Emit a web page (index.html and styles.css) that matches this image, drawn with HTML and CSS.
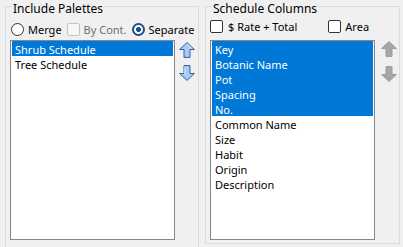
FILE: index.html
```html
<!DOCTYPE html>
<html>
<head>
<meta charset="utf-8">
<link rel="stylesheet" href="styles.css">
</head>
<body>
<div class="dialog">
  <fieldset class="group group-left">
    <legend class="group-title">Include Palettes</legend>
    <div class="options options-left">
      <label class="opt"><span class="radio"></span><span>Merge</span></label>
      <label class="opt opt-disabled"><span class="check check-disabled"></span><span>By Cont.</span></label>
      <label class="opt"><span class="radio radio-on"></span><span>Separate</span></label>
    </div>
    <div class="list-area list-area-left">
      <ul class="listbox">
        <li class="item sel">Shrub Schedule</li>
        <li class="item">Tree Schedule</li>
      </ul>
      <div class="movers movers-left">
        <svg class="arrow" width="16" height="16" viewBox="0 0 16 16"><path d="M8 0.6 L15.4 7.5 L11 7.5 L11 15.4 L5 15.4 L5 7.5 L0.6 7.5 Z" fill="#a9cbf2" stroke="#2f62a3" stroke-width="1" stroke-linejoin="round"/><path d="M8 2.3 L12.8 6.6" stroke="#e4f0fc" stroke-width="1" fill="none"/></svg>
        <svg class="arrow" width="16" height="16" viewBox="0 0 16 16"><path d="M8 15.4 L15.4 8.5 L11 8.5 L11 0.6 L5 0.6 L5 8.5 L0.6 8.5 Z" fill="#a9cbf2" stroke="#2f62a3" stroke-width="1" stroke-linejoin="round"/><path d="M5.9 1.6 L5.9 9.2" stroke="#e4f0fc" stroke-width="1" fill="none"/></svg>
      </div>
    </div>
  </fieldset>
  <fieldset class="group group-right">
    <legend class="group-title">Schedule Columns</legend>
    <div class="options options-right">
      <label class="opt opt-rate"><span class="check"></span><span>$ Rate + Total</span></label>
      <label class="opt"><span class="check"></span><span>Area</span></label>
    </div>
    <div class="list-area list-area-right">
      <ul class="listbox">
        <li class="item sel">Key</li>
        <li class="item sel">Botanic Name</li>
        <li class="item sel">Pot</li>
        <li class="item sel">Spacing</li>
        <li class="item sel">No.</li>
        <li class="item">Common Name</li>
        <li class="item">Size</li>
        <li class="item">Habit</li>
        <li class="item">Origin</li>
        <li class="item">Description</li>
      </ul>
      <div class="movers movers-right">
        <svg class="arrow" width="16" height="16" viewBox="0 0 16 16"><path d="M8 0.6 L15.4 7.5 L11 7.5 L11 15.4 L5 15.4 L5 7.5 L0.6 7.5 Z" fill="#a6a6a6" stroke="#9c9c9c" stroke-width="1" stroke-linejoin="round"/></svg>
        <svg class="arrow" width="16" height="16" viewBox="0 0 16 16"><path d="M8 15.4 L15.4 8.5 L11 8.5 L11 0.6 L5 0.6 L5 8.5 L0.6 8.5 Z" fill="#a6a6a6" stroke="#9c9c9c" stroke-width="1" stroke-linejoin="round"/></svg>
      </div>
    </div>
  </fieldset>
</div>
</body>
</html>
```
FILE: styles.css
```css
html, body {
  margin: 0;
  padding: 0;
  background: #f0f0f0;
}
body {
  font-family: "Noto Sans", "Open Sans", sans-serif;
  font-size: 11px;
  color: #000;
}
.dialog {
  width: 403px;
  height: 247px;
  overflow: hidden;
  box-sizing: border-box;
  display: flex;
  align-items: flex-start;
  gap: 6px;
  padding-left: 5px;
}
.group {
  margin: 0;
  padding: 0 2px 0 4px;
  border: 1px solid #dcdcdc;
  box-sizing: border-box;
  min-width: 0;
}
.group-left {
  width: 194px;
  height: 252px;
}
.group-right {
  width: 195px;
  height: 244px;
}
.group-title {
  font-size: 12px;
  line-height: 9px;
  padding: 4px 1px 0;
  margin-left: 2px;
  color: #000;
}
.options {
  display: flex;
  align-items: center;
  height: 17px;
}
.options-left {
  margin: 8px 0 2px;
  padding-left: 1px;
  gap: 5px;
}
.options-right {
  margin: 5px 0 5px;
  gap: 31px;
}
.opt {
  display: flex;
  align-items: center;
  gap: 4px;
  white-space: nowrap;
}
.opt-rate {
  gap: 5px;
}
.opt-disabled {
  color: #6d6d6d;
}
.radio {
  width: 13px;
  height: 13px;
  box-sizing: border-box;
  border: 1px solid #333;
  border-radius: 50%;
  background: #fff;
}
.radio-on {
  border: 2px solid #1b4e8c;
  background: radial-gradient(circle at center, #1b4e8c 0 2.2px, #fff 2.8px);
}
.check {
  width: 13px;
  height: 13px;
  box-sizing: border-box;
  border: 1px solid #333;
  border-radius: 2px;
  background: #fff;
}
.check-disabled {
  border-color: #c4c4c4;
  background: #f7f7f7;
}
.list-area {
  display: flex;
  align-items: flex-start;
}
.list-area-left {
  gap: 4px;
}
.list-area-right {
  gap: 6px;
}
.listbox {
  width: 165px;
  height: 200px;
  box-sizing: border-box;
  margin: 0;
  padding: 0 1px;
  list-style: none;
  border: 1px solid #828790;
  background: #fff;
}
.item {
  height: 15px;
  box-sizing: border-box;
  padding: 2px 0 0 3px;
  line-height: 13px;
  white-space: nowrap;
}
.item.sel {
  background: #0078d7;
  color: #fff;
}
.movers {
  display: flex;
  flex-direction: column;
}
.movers-left {
  padding-top: 2px;
  gap: 7px;
}
.movers-right {
  padding-top: 1px;
  gap: 9px;
}
.arrow {
  display: block;
}
```
